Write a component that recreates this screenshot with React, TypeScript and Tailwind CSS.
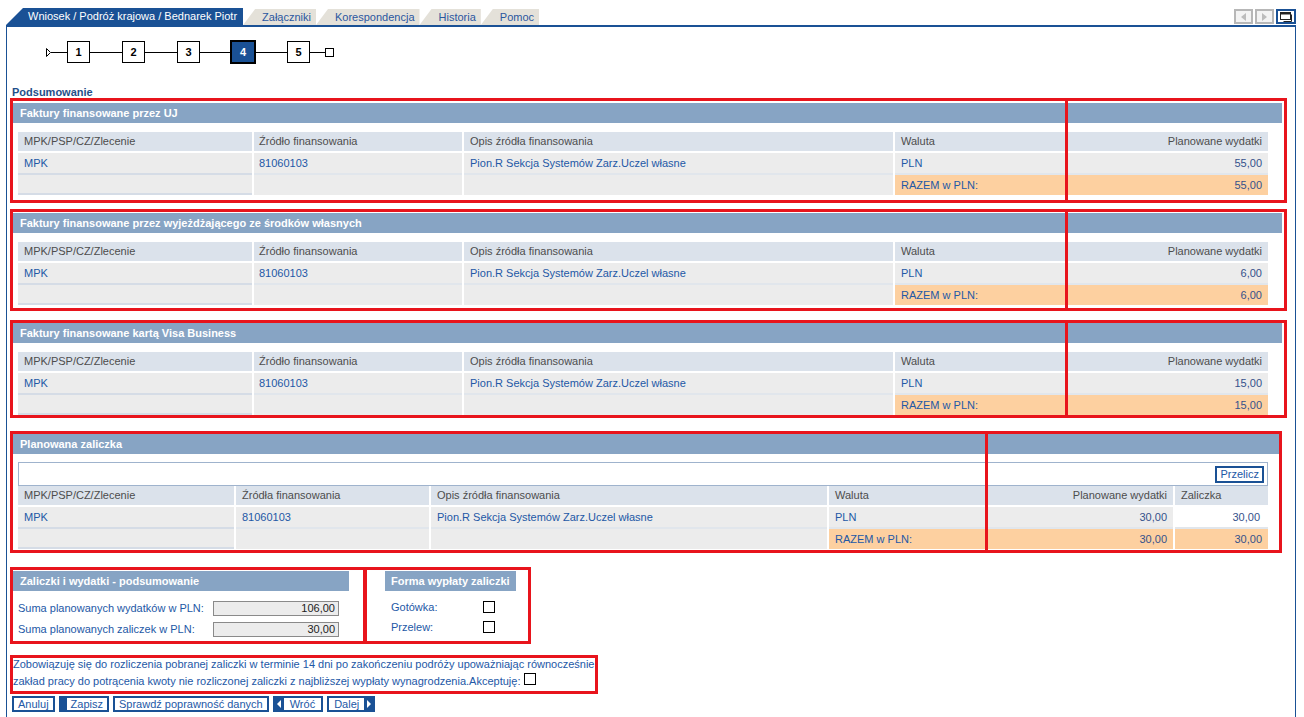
import React from "react";

const G5 = "grid grid-cols-[234px_208px_429px_170px_201px] gap-x-[2px]";
const G6 = "grid grid-cols-[216px_193px_396px_156px_186px_93px] gap-x-[2px]";

function Tabs() {
  return (
    <div className="ml-[6px] w-[1290px] h-[25px] flex items-end">
      <div className="h-[17px] pl-[22px] pr-[6px] bg-[#1a5195] text-white leading-[17px] [clip-path:polygon(17px_0,100%_0,100%_100%,0_100%)]">
        Wniosek / Podróż krajowa / Bednarek Piotr
      </div>
      {["Załączniki", "Korespondencja", "Historia", "Pomoc"].map((t) => (
        <div
          key={t}
          className="h-[16px] pl-[19px] pr-[5px] bg-[#e4e1d9] text-[#2b579f] leading-[16px] [clip-path:polygon(12px_0,100%_0,100%_100%,0_100%)]"
        >
          {t}
        </div>
      ))}
      {/* nawigacja prawa */}
      <div className="ml-auto mb-[1px] flex gap-[2px]">
        <div className="w-[19px] h-[15px] border-2 border-[#b7b7b7] bg-[#f3f3f3] flex items-center justify-center">
          <svg width="5" height="8" viewBox="0 0 5 8">
            <path d="M5 0 L0 4 L5 8 Z" fill="#bcbcbc" />
          </svg>
        </div>
        <div className="w-[19px] h-[15px] border-2 border-[#b7b7b7] bg-[#f3f3f3] flex items-center justify-center">
          <svg width="5" height="8" viewBox="0 0 5 8">
            <path d="M0 0 L5 4 L0 8 Z" fill="#bcbcbc" />
          </svg>
        </div>
        <div className="w-[20px] h-[15px] border-2 border-[#1a5195] bg-white flex items-center justify-center">
          <svg width="13" height="10" viewBox="0 0 13 10">
            <rect x="0.5" y="0.5" width="10" height="7" fill="#fff" stroke="#222" />
            <rect x="0.5" y="0.5" width="10" height="2" fill="#222" />
            <path d="M11.5 2.5 V9.5 H3.5" fill="none" stroke="#222" />
          </svg>
        </div>
      </div>
    </div>
  );
}

function Step({ n, active }: { n: number; active?: boolean }) {
  if (active)
    return (
      <div className="w-[26px] h-[24px] border-2 border-black bg-[#1a5195] text-white font-bold flex items-center justify-center">
        {n}
      </div>
    );
  return (
    <div className="w-[23px] h-[22px] border border-black bg-white font-bold text-black flex items-center justify-center">
      {n}
    </div>
  );
}

function Stepper() {
  return (
    <div className="ml-[33px] h-[22px] flex items-center">
      <svg width="5" height="9" viewBox="0 0 5 9">
        <path d="M0.5 0.5 L4.5 4.5 L0.5 8.5 Z" fill="#fff" stroke="#000" />
      </svg>
      <div className="h-px w-[16px] bg-black" />
      <Step n={1} />
      <div className="h-px w-[32px] bg-black" />
      <Step n={2} />
      <div className="h-px w-[32px] bg-black" />
      <Step n={3} />
      <div className="h-px w-[30px] bg-black" />
      <Step n={4} active />
      <div className="h-px w-[31px] bg-black" />
      <Step n={5} />
      <div className="h-px w-[15px] bg-black" />
      <div className="w-[9px] h-[9px] border border-black bg-white" />
    </div>
  );
}

const head = "flex items-center px-[6px] bg-[#dbe2eb] text-[#4d4d4d]";
const cell = "flex items-center px-[6px] bg-[#ececec] text-[#2358a6]";
const orange = "flex items-center px-[6px] bg-[#fdd0a0] text-[#2358a6]";

function InvoiceSection({
  title,
  amount,
  wrap,
  red,
}: {
  title: string;
  amount: string;
  wrap: string;
  red: string;
}) {
  return (
    <div className={"relative w-[1269px] " + wrap}>
      <div className="h-[20px] bg-[#87a4c4] pl-[7px] font-bold text-white flex items-center">{title}</div>
      <div className="ml-[5px] mt-[9px] w-[1250px]">
        <div className={G5 + " h-[19px]"}>
          <div className={head}>MPK/PSP/CZ/Zlecenie</div>
          <div className={head + " pl-[5px]"}>Źródło finansowania</div>
          <div className={head}>Opis źródła finansowania</div>
          <div className={head}>Waluta</div>
          <div className={head + " justify-end"}>Planowane wydatki</div>
        </div>
        <div className={G5 + " mt-[2px] h-[22px]"}>
          <div className={cell + " border-b-2 border-[#d5dce6]"}>MPK</div>
          <div className={cell + " pl-[5px] border-b-2 border-[#e1e6ec]"}>81060103</div>
          <div className={cell + " border-b-2 border-[#e1e6ec]"}>Pion.R Sekcja Systemów Zarz.Uczel własne</div>
          <div className={cell + " border-b-2 border-[#e1e6ec]"}>PLN</div>
          <div className={cell + " justify-end text-[#35528b] border-b-2 border-[#e1e6ec]"}>{amount}</div>
        </div>
        <div className={G5 + " h-[20px]"}>
          <div className={cell + " border-b-2 border-[#d5dce6]"} />
          <div className={cell} />
          <div className={cell} />
          <div className={orange}>RAZEM w PLN:</div>
          <div className={orange + " justify-end text-[#35528b]"}>{amount}</div>
        </div>
      </div>
      <div className={"absolute pointer-events-none border-[3px] border-[#e8141c] left-[-3px] w-[1277px] " + red} />
      <div className={"absolute pointer-events-none border-[3px] border-[#e8141c] left-[1052px] w-[222px] " + red} />
    </div>
  );
}

function AdvanceSection() {
  return (
    <div className="relative w-[1269px] mt-[19px]">
      <div className="h-[20px] bg-[#87a4c4] pl-[7px] font-bold text-white flex items-center">Planowana zaliczka</div>
      <div className="ml-[5px] mt-[8px] w-[1250px]">
        <div className="h-[24px] border border-[#9fb3cd] bg-white flex items-center justify-end pr-[3px]">
          <div className="h-[17px] px-[3px] border-2 border-[#1a5195] bg-white text-[#2358a6] leading-[13px]">Przelicz</div>
        </div>
        <div className={G6 + " h-[19px]"}>
          <div className={head}>MPK/PSP/CZ/Zlecenie</div>
          <div className={head}>Źródła finansowania</div>
          <div className={head}>Opis źródła finansowania</div>
          <div className={head}>Waluta</div>
          <div className={head + " justify-end"}>Planowane wydatki</div>
          <div className={head}>Zaliczka</div>
        </div>
        <div className={G6 + " mt-[2px] h-[22px]"}>
          <div className={cell + " border-b-2 border-[#d5dce6]"}>MPK</div>
          <div className={cell + " border-b-2 border-[#e1e6ec]"}>81060103</div>
          <div className={cell + " border-b-2 border-[#e1e6ec]"}>Pion.R Sekcja Systemów Zarz.Uczel własne</div>
          <div className={cell + " border-b-2 border-[#e1e6ec]"}>PLN</div>
          <div className={cell + " justify-end text-[#35528b] border-b-2 border-[#e1e6ec]"}>30,00</div>
          <div className="flex items-center justify-end pr-[8px] bg-white text-[#35528b] border-b-2 border-[#e1e6ec]">30,00</div>
        </div>
        <div className={G6 + " h-[20px]"}>
          <div className={cell + " border-b-2 border-[#d5dce6]"} />
          <div className={cell} />
          <div className={cell} />
          <div className={orange}>RAZEM w PLN:</div>
          <div className={orange + " justify-end text-[#35528b]"}>30,00</div>
          <div className={orange + " justify-end text-[#35528b]"}>30,00</div>
        </div>
      </div>
      <div className="absolute pointer-events-none border-[3px] border-[#e8141c] left-[-3px] top-[-3px] w-[1272px] h-[122px]" />
      <div className="absolute pointer-events-none border-[3px] border-[#e8141c] left-[972px] top-[-3px] w-[297px] h-[122px]" />
    </div>
  );
}

function Summary() {
  return (
    <div className="mt-[22px] flex items-start">
      <div className="relative w-[336px]">
        <div className="h-[20px] bg-[#87a4c4] pl-[7px] font-bold text-white flex items-center">
          Zaliczki i wydatki - podsumowanie
        </div>
        <div className="mt-[10px] pl-[5px] h-[15px] flex items-center">
          <span className="w-[195px] text-[#2358a6]">Suma planowanych wydatków w PLN:</span>
          <div className="w-[126px] h-[15px] bg-[#ececec] border border-[#8a8a8a] pr-[3px] text-right leading-[13px] text-[#222]">
            106,00
          </div>
        </div>
        <div className="mt-[6px] pl-[5px] h-[15px] flex items-center">
          <span className="w-[195px] text-[#2358a6]">Suma planowanych zaliczek w PLN:</span>
          <div className="w-[126px] h-[15px] bg-[#ececec] border border-[#8a8a8a] pr-[3px] text-right leading-[13px] text-[#222]">
            30,00
          </div>
        </div>
        <div className="absolute pointer-events-none border-[3px] border-[#e8141c] left-[-3px] top-[-4px] w-[356px] h-[77px]" />
      </div>
      <div className="relative ml-[36px] w-[131px]">
        <div className="h-[20px] bg-[#87a4c4] pl-[6px] font-bold text-white flex items-center">Forma wypłaty zaliczki</div>
        <div className="mt-[10px] pl-[6px] h-[12px] flex items-center">
          <span className="w-[92px] text-[#2358a6]">Gotówka:</span>
          <div className="w-[12px] h-[12px] border border-black bg-white" />
        </div>
        <div className="mt-[8px] pl-[6px] h-[12px] flex items-center">
          <span className="w-[92px] text-[#2358a6]">Przelew:</span>
          <div className="w-[12px] h-[12px] border border-black bg-white" />
        </div>
        <div className="absolute pointer-events-none border-[3px] border-[#e8141c] left-[-21px] top-[-4px] w-[167px] h-[77px]" />
      </div>
    </div>
  );
}

function Buttons() {
  const btn = "h-[16px] border-2 border-[#1a5195] bg-white px-[4px] leading-[12px] text-[#2358a6]";
  return (
    <div className="mt-[6px] ml-[-1px] flex gap-[4px]">
      <div className={btn}>Anuluj</div>
      <div className={btn + " border-l-[8px]"}>Zapisz</div>
      <div className={btn}>Sprawdź poprawność danych</div>
      <div className="h-[16px] flex border-2 border-[#1a5195] bg-white text-[#2358a6] leading-[12px]">
        <span className="w-[9px] bg-[#1a5195] flex items-center justify-center">
          <svg width="4" height="8" viewBox="0 0 4 8">
            <path d="M4 0 L0 4 L4 8 Z" fill="#fff" />
          </svg>
        </span>
        <span className="px-[6px]">Wróć</span>
      </div>
      <div className="h-[16px] flex border-2 border-[#1a5195] bg-white text-[#2358a6] leading-[12px]">
        <span className="px-[5px]">Dalej</span>
        <span className="w-[9px] bg-[#1a5195] flex items-center justify-center">
          <svg width="4" height="8" viewBox="0 0 4 8">
            <path d="M0 0 L4 4 L0 8 Z" fill="#fff" />
          </svg>
        </span>
      </div>
    </div>
  );
}

export default function App() {
  return (
    <div className="w-[1304px] h-[717px] overflow-hidden bg-white font-['Liberation_Sans',Arial,sans-serif] text-[11px] leading-[13px]">
      <div className="pt-0">
        <Tabs />
        <div className="ml-[6px] w-[1290px] min-h-[692px] border-t-2 border-x border-[#1a5195] pl-[6px] pt-[14px]">
          <Stepper />
          <div className="mt-[23px] ml-[-1px] h-[13px] font-bold text-[#1f4f8a]">Podsumowanie</div>

          <InvoiceSection
            title="Faktury finansowane przez UJ"
            amount="55,00"
            wrap="mt-[4px]"
            red="top-[-5px] h-[105px]"
          />
          <InvoiceSection
            title="Faktury finansowane przez wyjeżdżającego ze środków własnych"
            amount="6,00"
            wrap="mt-[18px]"
            red="top-[-4px] h-[102px]"
          />
          <InvoiceSection
            title="Faktury finansowane kartą Visa Business"
            amount="15,00"
            wrap="mt-[18px]"
            red="top-[-3px] h-[98px]"
          />
          <AdvanceSection />
          <Summary />

          <div className="relative mt-[19px] leading-[17px] text-[#2358a6]">
            Zobowiązuję się do rozliczenia pobranej zaliczki w terminie 14 dni po zakończeniu podróży upoważniając równocześnie
            <br />
            zakład pracy do potrącenia kwoty nie rozliczonej zaliczki z najbliższej wypłaty wynagrodzenia.Akceptuję:
            <span className="inline-block ml-[4px] w-[12px] h-[12px] border border-black bg-white align-baseline" />
            <div className="absolute pointer-events-none border-[3px] border-[#e8141c] left-[-3px] top-[-1px] w-[588px] h-[39px]" />
          </div>
          <Buttons />
        </div>
      </div>
    </div>
  );
}
